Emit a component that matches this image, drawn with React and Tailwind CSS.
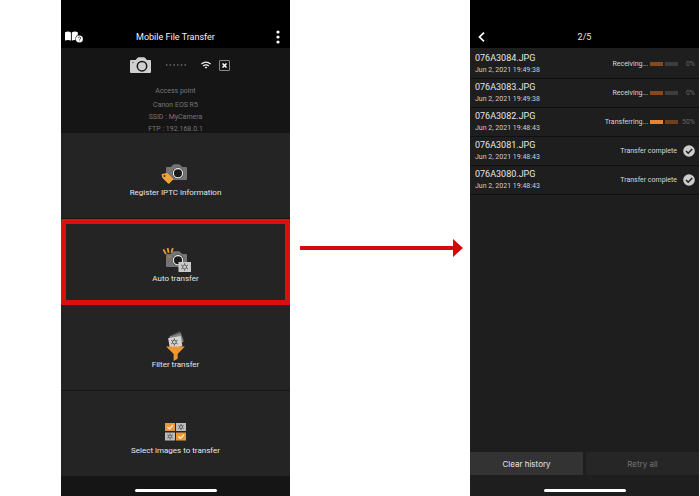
import React from "react";

const files = [
  { name: "076A3084.JPG", date: "Jun 2, 2021 19:49:38", state: "receiving", percent: 0 },
  { name: "076A3083.JPG", date: "Jun 2, 2021 19:49:38", state: "receiving", percent: 0 },
  { name: "076A3082.JPG", date: "Jun 2, 2021 19:48:43", state: "transferring", percent: 50 },
  { name: "076A3081.JPG", date: "Jun 2, 2021 19:48:43", state: "complete" },
  { name: "076A3080.JPG", date: "Jun 2, 2021 19:48:43", state: "complete" },
];

function GuideIcon() {
  return (
    <svg viewBox="0 0 19 12" className="h-3 w-[19px]" aria-hidden="true">
      <path d="M0 1.2C2 .3 4.2.3 5.9 1.4V9.6C4.2 8.7 2 8.7 0 9.5Z" fill="#fff" />
      <path d="M6.8 1.4C8.6.3 10.8.3 12.8 1.2V9.5C10.8 8.7 8.6 8.7 6.8 9.6Z" fill="#fff" />
      <circle cx="14.4" cy="8" r="4" fill="#000" />
      <circle cx="14.4" cy="8" r="3.5" fill="#fff" />
      <path d="M13.2 7.2C13.2 5.6 15.7 5.6 15.7 7.1C15.7 8 14.5 8 14.5 8.9M14.5 9.6V10.2" fill="none" stroke="#222" strokeWidth=".8" />
    </svg>
  );
}

function CameraShape({ body, ring, lens }) {
  return (
    <>
      <path d="M1 3H4.8L7 .8Q7.5.2 8.3.2H12.7Q13.5.2 14 .8L16.2 3H20Q21 3 21 4V15Q21 16 20 16H1Q0 16 0 15V4Q0 3 1 3Z" fill={body} />
      <circle cx="12" cy="9.2" r="5.6" fill={lens} />
      <circle cx="12" cy="9.2" r="4.7" fill={lens} stroke={ring} strokeWidth="1.3" />
    </>
  );
}

function CameraIcon() {
  return (
    <svg viewBox="0 0 21 16" className="h-4 w-[21px]" aria-hidden="true">
      <path d="M1 3H5.6L7.6.7Q8 .2 8.8.2H13.8Q14.6.2 15 .7L17 3H20Q21 3 21 4V15Q21 16 20 16H1Q0 16 0 15V4Q0 3 1 3Z" fill="#d0d0d0" />
      <circle cx="12" cy="9.2" r="4.7" fill="#cfcfcf" stroke="#171717" strokeWidth="1.5" />
      <path d="M2 5.6H4" stroke="#777" />
    </svg>
  );
}

function WifiIcon() {
  return (
    <svg viewBox="0 0 10 8" className="h-2 w-[10px]" fill="none" stroke="#f2f2f2" strokeWidth="1.3" aria-hidden="true">
      <path d="M.4 3Q5-.9 9.6 3M2.2 4.9Q5 2.7 7.8 4.9" />
      <path d="M3.6 6.1Q5 5.2 6.4 6.1L5 7.7Z" fill="#f2f2f2" stroke="none" />
    </svg>
  );
}

function Gear({ x, y, r = 2.2, color = "#4d4d4d" }) {
  return (
    <g transform={`translate(${x} ${y})`} stroke={color} fill="none">
      <circle r={r * 0.72} strokeWidth=".8" />
      <path d={`M0 ${-r * 0.8}V${-r * 1.35}M0 ${r * 0.8}V${r * 1.35}M${r * 0.7} ${-r * 0.4}L${r * 1.2} ${-r * 0.7}M${-r * 0.7} ${-r * 0.4}L${-r * 1.2} ${-r * 0.7}M${r * 0.7} ${r * 0.4}L${r * 1.2} ${r * 0.7}M${-r * 0.7} ${r * 0.4}L${-r * 1.2} ${r * 0.7}`} strokeWidth=".9" />
    </g>
  );
}

function IptcIcon() {
  return (
    <svg viewBox="0 0 30 24" className="h-6 w-[30px]" aria-hidden="true">
      <g transform="translate(5 2)">
        <CameraShape body="#747474" ring="#e4e4e4" lens="#1b1b1b" />
      </g>
      <path d="M1.2 12L5.6 11Q6.2 10.9 6.6 11.3L11.9 16.6Q12.5 17.2 11.9 17.8L8.3 21.4Q7.7 22 7.1 21.4L1.7 16.2Q1.3 15.8 1.2 15.2L.6 12.8Q.5 12.1 1.2 12Z" fill="#f2a33a" />
      <circle cx="3.5" cy="14" r="1" fill="#3a2b17" />
    </svg>
  );
}

function AutoIcon() {
  return (
    <svg viewBox="0 0 30 26" className="h-[26px] w-[30px]" aria-hidden="true">
      <g transform="translate(5 4)">
        <CameraShape body="#747474" ring="#e4e4e4" lens="#1b1b1b" />
      </g>
      <circle cx="8.4" cy="9.8" r="1.1" fill="#b77b3a" />
      <path d="M2.4 2.4L4.9 7M6.6 1L7.6 5.8M11.8 1L10.4 5.8" stroke="#e89a35" strokeWidth="1.8" />
      <rect x="17.5" y="15" width="12.5" height="10" fill="#c9c9c9" />
      <Gear x={23.6} y={20} r={2.8} />
    </svg>
  );
}

function FilterIcon() {
  return (
    <svg viewBox="0 0 20 32" className="h-[30px] w-[19px] shrink-0" aria-hidden="true">
      <rect x="5.5" y="2.5" width="12" height="10" fill="#555" transform="rotate(-24 11 8)" />
      <rect x="4.5" y="4" width="13" height="10" fill="#858585" transform="rotate(-18 11 9)" />
      <rect x="3" y="6.5" width="13.5" height="11" fill="#d4d4d4" transform="rotate(-10 10 12)" />
      <Gear x={8.8} y={11.8} r={2.8} color="#383838" />
      <path d="M0 16.5H20L12.3 24.4V29.6L8 32V24.4Z" fill="#ec9732" />
    </svg>
  );
}

function SelectIcon() {
  return (
    <svg viewBox="0 0 21 18" className="h-[18px] w-[21px]" aria-hidden="true">
      <rect width="10" height="8" fill="#ec9732" />
      <rect x="11" width="10" height="8" fill="#bcbcbc" />
      <rect y="9.5" width="10" height="8" fill="#bcbcbc" />
      <rect x="11" y="9.5" width="10" height="8" fill="#ec9732" />
      <path d="M2.5 4L4.4 5.9L8 2.2M13.5 13.5L15.4 15.4L19 11.7" fill="none" stroke="#fff3dd" strokeWidth="1.3" />
      <Gear x={16} y={4} />
      <Gear x={5} y={13.5} />
    </svg>
  );
}

function Tile({ icon, label, highlighted }) {
  return (
    <button
      type="button"
      className={
        "flex min-h-[86px] w-full flex-1 flex-col items-center bg-[#242424] pt-[26px] text-[8px] leading-[10px] text-[#e6e6e6] " +
        (highlighted ? "outline-5 -outline-offset-5 outline-[#d90f12]" : "border-b border-[#171717]")
      }
    >
      <span className="flex h-[29px] items-center justify-center">{icon}</span>
      <span>{label}</span>
    </button>
  );
}

function HomeBar() {
  return <div className="h-[3px] w-[82px] rounded-full bg-white" />;
}

function MenuPhone() {
  return (
    <section className="flex min-w-0 flex-1 flex-col bg-[#151515]">
      <header className="flex h-12 items-end justify-between bg-black px-1 pb-[5px]">
        <button type="button" aria-label="Guide" className="flex h-3 w-[19px] items-center">
          <GuideIcon />
        </button>
        <h1 className="text-[9px] leading-[12px] text-[#f2f2f2]">Mobile File Transfer</h1>
        <button type="button" aria-label="More" className="flex h-3 w-[19px] items-center justify-end pr-1.5">
          <svg viewBox="0 0 4 14" className="h-[14px] w-1 shrink-0" fill="#fff" aria-hidden="true">
            <circle cx="2" cy="2" r="1.6" />
            <circle cx="2" cy="7" r="1.6" />
            <circle cx="2" cy="12" r="1.6" />
          </svg>
        </button>
      </header>
      <div className="flex h-[85px] flex-col items-center pt-[9px] text-[7px] leading-3 text-[#767676]">
        <div className="flex h-4 items-center pl-[9px]">
          <CameraIcon />
          <svg viewBox="0 0 20 2" className="mx-[15px] h-0.5 w-5" aria-hidden="true">
            <path d="M0 1H20" stroke="#a0a0a0" strokeWidth="1" strokeDasharray="1.4 2.3" />
          </svg>
          <WifiIcon />
          <button type="button" aria-label="Disconnect" className="ml-2 flex size-[11px] items-center justify-center rounded-[1px] border border-[#8a8a8a]">
            <svg viewBox="0 0 5 5" className="size-[5px]" aria-hidden="true">
              <path d="M.5.5L4.5 4.5M4.5.5L.5 4.5" stroke="#fff" strokeWidth="1.5" />
            </svg>
          </button>
        </div>
        <p className="mt-3">Access point</p>
        <p className="mt-0.5">Canon EOS R5</p>
        <p>SSID : MyCamera</p>
        <p>FTP : 192.168.0.1</p>
      </div>
      <Tile icon={<IptcIcon />} label="Register IPTC information" />
      <Tile icon={<AutoIcon />} label="Auto transfer" highlighted />
      <Tile icon={<FilterIcon />} label="Filter transfer" />
      <Tile icon={<SelectIcon />} label="Select images to transfer" />
      <footer className="flex h-[19px] items-center justify-center pt-2">
        <HomeBar />
      </footer>
    </section>
  );
}

function Progress({ file }) {
  const active = file.state === "transferring";
  return (
    <>
      <span>{active ? "Transferring..." : "Receiving..."}</span>
      <span className="ml-0.5 flex gap-0.5">
        <span className={"h-1 w-[13px] " + (active ? "bg-[#ee812b]" : "bg-[#85491c]")} />
        <span className={"h-1 w-[13px] " + (active ? "bg-[#70401a]" : "bg-[#3d3d3d]")} />
      </span>
      <span className="w-[17px] text-right text-[#666]">{file.percent}%</span>
    </>
  );
}

function HistoryPhone() {
  return (
    <section className="flex min-w-0 flex-1 flex-col bg-[#1e1e1e]">
      <header className="grid h-12 grid-cols-3 items-end bg-black px-2 pb-[5px]">
        <button type="button" aria-label="Back" className="flex h-3 w-2 items-center">
          <svg viewBox="0 0 7 10" className="h-[10px] w-[7px]" fill="none" stroke="#fff" strokeWidth="1.7" aria-hidden="true">
            <path d="M6 .7L1.5 5L6 9.3" />
          </svg>
        </button>
        <h2 className="text-center text-[9px] leading-[12px] text-[#e6e6e6]">2/5</h2>
      </header>
      <ul className="pt-0.5">
        {files.map((file) => (
          <li key={file.name} className="flex h-[29px] items-center justify-between border-b border-[#101010] pr-1 pl-[5px]">
            <div>
              <p className="text-[9px] leading-[12px] text-[#e6e6e6]">{file.name}</p>
              <p className="text-[7px] leading-[12px] text-[#cfcfcf]">{file.date}</p>
            </div>
            <div className="flex items-center text-[7px] leading-[12px] text-[#d8d8d8]">
              {file.state === "complete" ? (
                <>
                  <span>Transfer complete</span>
                  <svg viewBox="0 0 12 12" className="ml-1.5 size-3" aria-hidden="true">
                    <circle cx="6" cy="6" r="5.8" fill="#cdcdcd" />
                    <path d="M3 6L5.2 8.2L9.2 4" fill="none" stroke="#222" strokeWidth="1.6" />
                  </svg>
                </>
              ) : (
                <Progress file={file} />
              )}
            </div>
          </li>
        ))}
      </ul>
      <footer className="mt-auto">
        <div className="grid h-[23px] grid-cols-2 gap-[3px] font-['Inter','Liberation_Sans',sans-serif] text-[8px]">
          <button type="button" className="bg-[#333] text-[#e6e6e6]">Clear history</button>
          <button type="button" disabled className="bg-[#262626] text-[#747474]">Retry all</button>
        </div>
        <div className="flex h-[21px] items-center justify-center pt-[10px]">
          <HomeBar />
        </div>
      </footer>
    </section>
  );
}

export default function App() {
  return (
    <main className="flex min-h-screen bg-white pr-px pl-[61px] font-['Roboto','Liberation_Sans',sans-serif]">
      <MenuPhone />
      <div className="flex w-[180px] shrink-0 items-center pr-[7px] pl-[10px]">
        <span className="h-1 flex-1 bg-[#d2090d]" />
        <svg viewBox="0 0 10 18" className="h-[18px] w-[10px]" fill="#d2090d" aria-hidden="true">
          <path d="M0 0L10 9L0 18Z" />
        </svg>
      </div>
      <HistoryPhone />
    </main>
  );
}
